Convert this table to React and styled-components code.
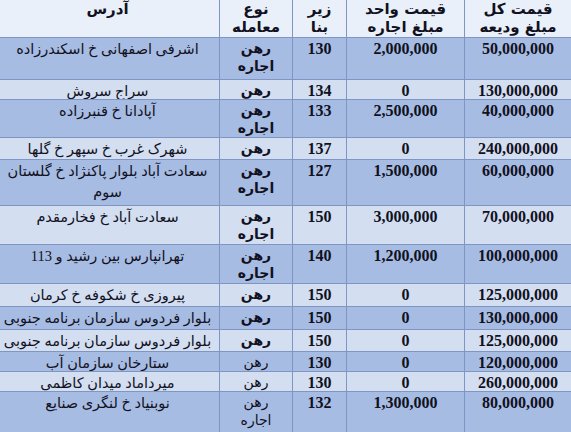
import React from "react";
import styled, { createGlobalStyle } from "styled-components";

const GlobalStyle = createGlobalStyle`
  html, body {
    margin: 0;
    padding: 0;
    background: #ffffff;
  }
  body {
    width: 571px;
    height: 432px;
    overflow: hidden;
  }
`;

const headers = [
  ["قیمت کل", "مبلغ ودیعه"],
  ["قیمت واحد", "مبلغ اجاره"],
  ["زیر", "بنا"],
  ["نوع", "معامله"],
  ["آدرس"],
];

const rows = [
  { total: "50,000,000", unit: "2,000,000", area: "130", type: "رهن اجاره", address: "اشرفی اصفهانی خ اسکندرزاده" },
  { total: "130,000,000", unit: "0", area: "134", type: "رهن", address: "سراج سروش" },
  { total: "40,000,000", unit: "2,500,000", area: "133", type: "رهن اجاره", address: "آپادانا خ قنبرزاده" },
  { total: "240,000,000", unit: "0", area: "137", type: "رهن", address: "شهرک غرب خ سپهر خ گلها" },
  { total: "60,000,000", unit: "1,500,000", area: "127", type: "رهن اجاره", address: "سعادت آباد بلوار پاکنژاد خ گلستان سوم" },
  { total: "70,000,000", unit: "3,000,000", area: "150", type: "رهن اجاره", address: "سعادت آباد خ فخارمقدم" },
  { total: "100,000,000", unit: "1,200,000", area: "140", type: "رهن اجاره", address: "تهرانپارس بین رشید و 113" },
  { total: "125,000,000", unit: "0", area: "150", type: "رهن", address: "پیروزی خ شکوفه خ کرمان" },
  { total: "130,000,000", unit: "0", area: "150", type: "رهن", address: "بلوار فردوس سازمان برنامه جنوبی" },
  { total: "125,000,000", unit: "0", area: "150", type: "رهن", address: "بلوار فردوس سازمان برنامه جنوبی" },
  { total: "120,000,000", unit: "0", area: "130", type: "رهن", address: "ستارخان سازمان آب", light: true },
  { total: "260,000,000", unit: "0", area: "130", type: "رهن", address: "میرداماد میدان کاظمی", light: true },
  { total: "80,000,000", unit: "1,300,000", area: "132", type: "رهن اجاره", address: "نوبنیاد خ لنگری صنایع", light: true },
];

const Table = styled.div`
  direction: rtl;
  display: grid;
  grid-template-columns: 106px 117px 53px 72px 223px;
  grid-template-rows: 37px 41px 19px 37px 21px 45px 38px 38px 22px 22px 21px 19px 19px 45px;
  gap: 1px;
  background: #7f96c4;
  width: 571px;
  height: 432px;
  overflow: hidden;
  color: #111122;
`;

const HeadCell = styled.div`
  background: #eaf0f9;
  display: flex;
  flex-direction: column;
  align-items: center;
  justify-content: flex-start;
  font-family: "DejaVu Sans", sans-serif;
  font-weight: bold;
  font-size: 15px;
  line-height: 18px;
`;

const Cell = styled.div`
  background: ${(p) => (p.$dark ? "#a7bce3" : "#d3def1")};
  display: flex;
  flex-direction: column;
  align-items: center;
  text-align: center;
  padding: 1px 6px 0;
  overflow: hidden;
`;

const Num = styled.span`
  font-family: "Liberation Serif", serif;
  font-weight: bold;
  font-size: 16px;
  line-height: 19px;
`;

const TypeText = styled.span`
  font-family: "DejaVu Sans", sans-serif;
  font-weight: ${(p) => (p.$light ? "normal" : "bold")};
  font-size: 14px;
  line-height: 18px;
`;

const AddressText = styled.span`
  font-family: "Liberation Serif", "DejaVu Sans", sans-serif;
  font-size: 14.5px;
  line-height: 21px;
`;

export default function App() {
  return (
    <>
      <GlobalStyle />
      <Table>
        {headers.map((h, i) => (
          <HeadCell key={"h" + i}>
            {h.map((line) => (
              <span key={line}>{line}</span>
            ))}
          </HeadCell>
        ))}
        {rows.map((r, i) => {
          const dark = i % 2 === 0;
          return (
            <React.Fragment key={i}>
              <Cell $dark={dark}>
                <Num>{r.total}</Num>
              </Cell>
              <Cell $dark={dark}>
                <Num>{r.unit}</Num>
              </Cell>
              <Cell $dark={dark}>
                <Num>{r.area}</Num>
              </Cell>
              <Cell $dark={dark}>
                {r.type.split(" ").map((w) => (
                  <TypeText key={w} $light={r.light}>
                    {w}
                  </TypeText>
                ))}
              </Cell>
              <Cell $dark={dark}>
                <AddressText>{r.address}</AddressText>
              </Cell>
            </React.Fragment>
          );
        })}
      </Table>
    </>
  );
}
